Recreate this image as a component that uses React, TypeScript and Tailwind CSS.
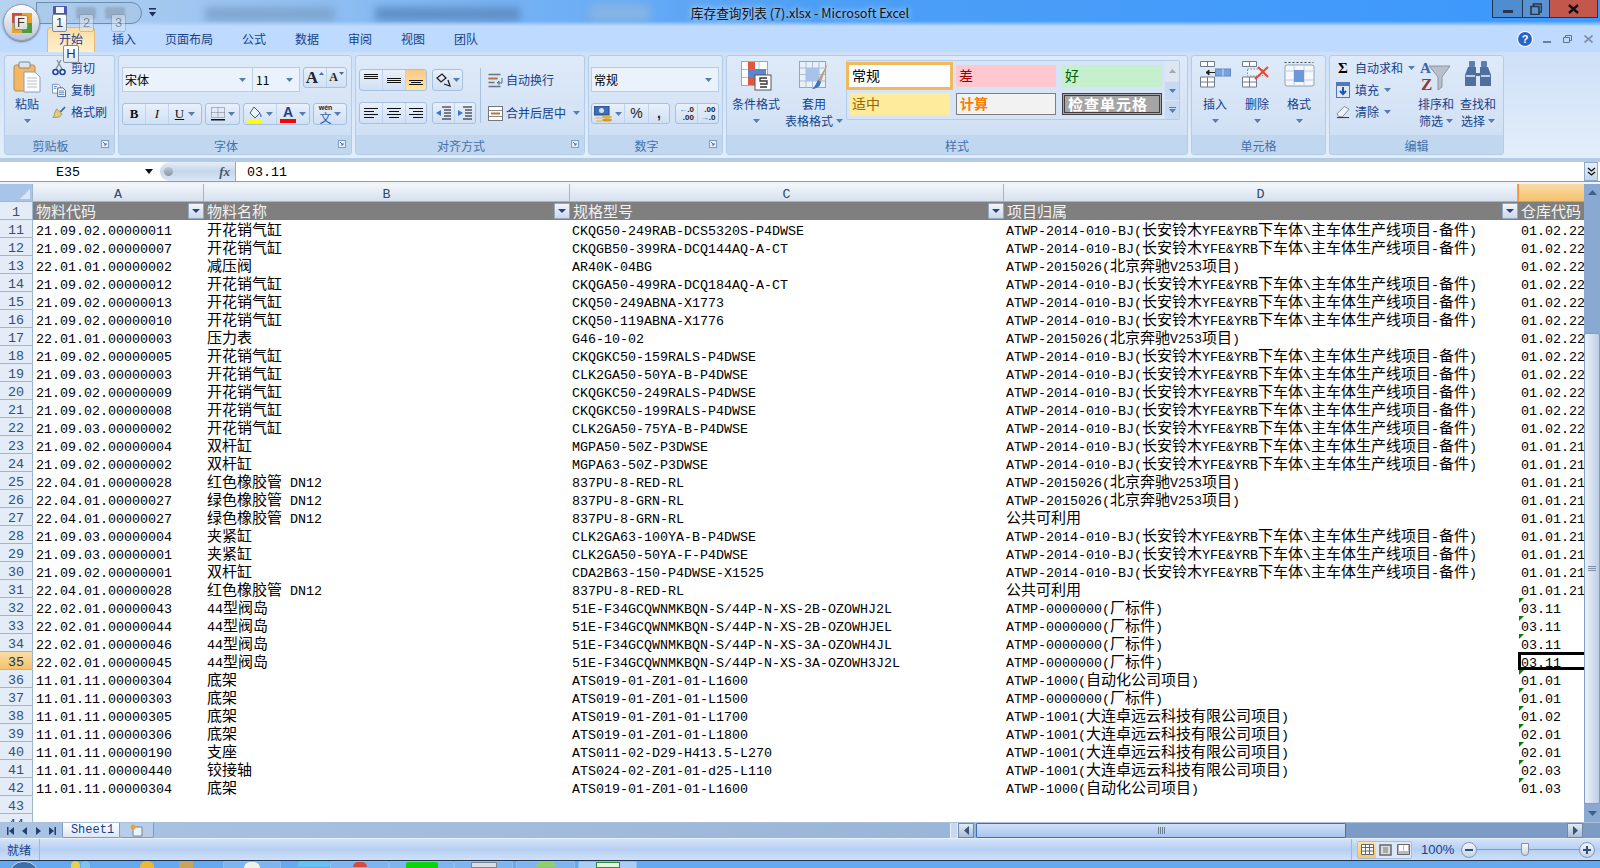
import { ReactNode } from "react"

const LING = "ATWP-2014-010-BJ(长安铃木YFE&YRB下车体\\主车体生产线项目-备件)"
const BENZ = "ATWP-2015026(北京奔驰V253项目)"
const PUB = "公共可利用"
const STD = "ATMP-0000000(厂标件)"
const AUTO = "ATWP-1000(自动化公司项目)"
const YUN = "ATWP-1001(大连卓远云科技有限公司项目)"
const VALVE = "开花销气缸"
const RED = "红色橡胶管 DN12"
const GRN = "绿色橡胶管 DN12"
const ISLAND = "44型阀岛"

const rows: [number, string, string, string, string, string][] = [
    [11, "21.09.02.00000011", VALVE, "CKQG50-249RAB-DCS5320S-P4DWSE", LING, "01.02.22"],
    [12, "21.09.02.00000007", VALVE, "CKQGB50-399RA-DCQ144AQ-A-CT", LING, "01.02.22"],
    [13, "22.01.01.00000002", "减压阀", "AR40K-04BG", BENZ, "01.02.22"],
    [14, "21.09.02.00000012", VALVE, "CKQGA50-499RA-DCQ184AQ-A-CT", LING, "01.02.22"],
    [15, "21.09.02.00000013", VALVE, "CKQ50-249ABNA-X1773", LING, "01.02.22"],
    [16, "21.09.02.00000010", VALVE, "CKQ50-119ABNA-X1776", LING, "01.02.22"],
    [17, "22.01.01.00000003", "压力表", "G46-10-02", BENZ, "01.02.22"],
    [18, "21.09.02.00000005", VALVE, "CKQGKC50-159RALS-P4DWSE", LING, "01.02.22"],
    [19, "21.09.03.00000003", VALVE, "CLK2GA50-50YA-B-P4DWSE", LING, "01.02.22"],
    [20, "21.09.02.00000009", VALVE, "CKQGKC50-249RALS-P4DWSE", LING, "01.02.22"],
    [21, "21.09.02.00000008", VALVE, "CKQGKC50-199RALS-P4DWSE", LING, "01.02.22"],
    [22, "21.09.03.00000002", VALVE, "CLK2GA50-75YA-B-P4DWSE", LING, "01.02.22"],
    [23, "21.09.02.00000004", "双杆缸", "MGPA50-50Z-P3DWSE", LING, "01.01.21"],
    [24, "21.09.02.00000002", "双杆缸", "MGPA63-50Z-P3DWSE", LING, "01.01.21"],
    [25, "22.04.01.00000028", RED, "837PU-8-RED-RL", BENZ, "01.01.21"],
    [26, "22.04.01.00000027", GRN, "837PU-8-GRN-RL", BENZ, "01.01.21"],
    [27, "22.04.01.00000027", GRN, "837PU-8-GRN-RL", PUB, "01.01.21"],
    [28, "21.09.03.00000004", "夹紧缸", "CLK2GA63-100YA-B-P4DWSE", LING, "01.01.21"],
    [29, "21.09.03.00000001", "夹紧缸", "CLK2GA50-50YA-F-P4DWSE", LING, "01.01.21"],
    [30, "21.09.02.00000001", "双杆缸", "CDA2B63-150-P4DWSE-X1525", LING, "01.01.21"],
    [31, "22.04.01.00000028", RED, "837PU-8-RED-RL", PUB, "01.01.21"],
    [32, "22.02.01.00000043", ISLAND, "51E-F34GCQWNMKBQN-S/44P-N-XS-2B-OZOWHJ2L", STD, "03.11"],
    [33, "22.02.01.00000044", ISLAND, "51E-F34GCQWNMKBQN-S/44P-N-XS-2B-OZOWHJEL", STD, "03.11"],
    [34, "22.02.01.00000046", ISLAND, "51E-F34GCQWNMKBQN-S/44P-N-XS-3A-OZOWH4JL", STD, "03.11"],
    [35, "22.02.01.00000045", ISLAND, "51E-F34GCQWNMKBQN-S/44P-N-XS-3A-OZOWH3J2L", STD, "03.11"],
    [36, "11.01.11.00000304", "底架", "ATS019-01-Z01-01-L1600", AUTO, "01.01"],
    [37, "11.01.11.00000303", "底架", "ATS019-01-Z01-01-L1500", STD, "01.01"],
    [38, "11.01.11.00000305", "底架", "ATS019-01-Z01-01-L1700", YUN, "01.02"],
    [39, "11.01.11.00000306", "底架", "ATS019-01-Z01-01-L1800", YUN, "02.01"],
    [40, "11.01.11.00000190", "支座", "ATS011-02-D29-H413.5-L270", YUN, "02.01"],
    [41, "11.01.11.00000440", "铰接轴", "ATS024-02-Z01-01-d25-L110", YUN, "02.03"],
    [42, "11.01.11.00000304", "底架", "ATS019-01-Z01-01-L1600", AUTO, "01.03"],
    [43, "", "", "", "", ""],
    [44, "", "", "", "", ""],
]

// latin glyphs are half the width of the chinese ones, as in SimSun
function Mixed({ text }: { text: string }) {
    const parts = text.split(/([\u2e80-\u9fff\uff00-\uffef]+)/)
    return (
        <>
            {parts.map((p, i) =>
                i % 2 ? (
                    <span key={i} className="font-['Noto_Sans_CJK_SC',sans-serif] text-[15px] leading-[0]">
                        {p}
                    </span>
                ) : (
                    <span key={i}>{p}</span>
                )
            )}
        </>
    )
}

function Caret({ className = "" }: { className?: string }) {
    return (
        <svg width="7" height="4" viewBox="0 0 7 4" className={`shrink-0 ${className}`}>
            <path d="M0 0h7L3.5 4z" fill="#567db1" />
        </svg>
    )
}

function KeyTip({ label, className }: { label: string; className: string }) {
    return (
        <div className={`absolute z-20 flex items-center justify-center rounded-[2px] border border-[#7f8c9c] bg-gradient-to-b from-white to-[#dfe6ef] font-['Liberation_Sans',sans-serif] text-[13px] text-[#333] ${className}`}>
            {label}
        </div>
    )
}

function TitleBar() {
    return (
        <div className="relative flex h-[26px] shrink-0 items-center justify-center overflow-hidden bg-gradient-to-r from-[#b7d2ee] via-[#4d9ff6] to-[#3b98fd]">
            <div className="absolute left-[205px] top-[7px] h-[14px] w-[130px] bg-[#7fa6d0] blur-[4px]" />
            <div className="absolute left-[375px] top-[7px] h-[14px] w-[145px] bg-[#5f8fc6] blur-[4px]" />
            <div className="absolute left-[590px] top-[4px] h-[18px] w-[60px] bg-[#86b5e4] blur-[5px]" />
            <div className="absolute bottom-0 left-0 h-[5px] w-full bg-gradient-to-b from-transparent to-[#bcd8fb]" />
            <span className="relative font-['Noto_Sans_CJK_SC',sans-serif] text-[12.7px] text-[#111] [text-shadow:0_0_6px_#ffffff]">
                库存查询列表 (7).xlsx - Microsoft Excel
            </span>
            <div className="absolute right-[2px] top-0 flex h-[18px] border-x border-b border-[#23344d]">
                <div className="flex w-[29px] items-end justify-center bg-[#4f8cd0] pb-[4px]">
                    <div className="h-[3px] w-[10px] bg-[#26364d]" />
                </div>
                <div className="flex w-[27px] items-center justify-center border-l border-[#23344d] bg-[#5a92d2]">
                    <svg width="12" height="12" viewBox="0 0 12 12">
                        <path d="M3.5 3V1h8v8H9M1 3.5h8v8H1z" fill="none" stroke="#26364d" strokeWidth="1.6" />
                    </svg>
                </div>
                <div className="flex w-[48px] items-center justify-center border-l border-[#23344d] bg-[#c4574b]">
                    <svg width="11" height="10" viewBox="0 0 11 10">
                        <path d="M1 1l9 8M10 1L1 9" stroke="#111" strokeWidth="2.4" />
                    </svg>
                </div>
            </div>
        </div>
    )
}

function Chrome() {
    return (
        <>
            <div className="absolute left-[36px] top-[2px] z-10 flex h-[22px] w-[106px] items-center gap-[9px] rounded-r-full border border-[#6c8db0] bg-[#a9c7e6]/60 pl-[16px]">
                <svg width="14" height="14" viewBox="0 0 14 14">
                    <rect width="14" height="14" rx="1" fill="#4b57a8" />
                    <rect x="3" y="1" width="8" height="6" fill="#f2f5fb" />
                    <rect x="4" y="9" width="6" height="5" fill="#b9c2d8" />
                </svg>
                <div className="h-[12px] w-[20px] rounded-[2px] bg-[#93adc9] blur-[1px]" />
                <div className="h-[12px] w-[20px] rounded-[2px] bg-[#93adc9] blur-[1px]" />
            </div>
            <svg width="7" height="9" viewBox="0 0 7 9" className="absolute left-[149px] top-[8px] z-10">
                <path d="M0 0h7v1.5H0zM0 4h7L3.5 8.5z" fill="#1c2f55" />
            </svg>
            <div className="absolute left-[3px] top-[4px] z-10 flex h-[37px] w-[37px] items-center justify-center rounded-full border border-[#8f9aa6] bg-gradient-to-b from-white to-[#b9c6d6] shadow-[0_1px_2px_#5d7089]">
                <svg width="24" height="24" viewBox="0 0 24 24">
                    <path d="M2 2h10v10H2z" fill="#d9492f" />
                    <path d="M12 2h10v10H12z" fill="#e8a32c" />
                    <path d="M2 12h10v10H2z" fill="#e8a32c" />
                    <path d="M12 12h10v10H12z" fill="#4f9a3a" />
                </svg>
            </div>
            <KeyTip label="F" className="left-[14px] top-[15px] h-[15px] w-[14px] opacity-90" />
            <KeyTip label="1" className="left-[52px] top-[14px] h-[18px] w-[15px]" />
            <KeyTip label="2" className="left-[79px] top-[14px] h-[18px] w-[15px] opacity-40" />
            <KeyTip label="3" className="left-[111px] top-[14px] h-[18px] w-[15px] opacity-40" />
            <KeyTip label="H" className="left-[63px] top-[45px] h-[18px] w-[16px]" />
        </>
    )
}

function TabStrip() {
    const tabs = ["插入", "页面布局", "公式", "数据", "审阅", "视图", "团队"]
    return (
        <div className="relative flex h-[26px] shrink-0 items-end bg-[#bedafe] pl-[47px] font-['Noto_Sans_CJK_SC',sans-serif] text-[12px] text-[#15428b]">
            <div className="flex h-[25px] w-[48px] items-center justify-center rounded-t-[4px] border-x border-t border-[#e8b768] bg-gradient-to-b from-[#fcdda2] to-[#fff0cd] pb-[2px]">
                开始
            </div>
            <div className="ml-[17px] flex h-[25px] items-center gap-[29px] pb-[2px]">
                {tabs.map((t) => (
                    <span key={t}>{t}</span>
                ))}
            </div>
            <div className="absolute right-0 top-[6px] flex h-[14px] items-center">
                <div className="mr-[11px] flex h-[14px] w-[14px] items-center justify-center rounded-full bg-[#2a62c8] font-['Liberation_Sans',sans-serif] text-[11px] font-bold text-white ring-1 ring-white">
                    ?
                </div>
                <div className="mr-[12px] mt-[6px] h-[2px] w-[8px] bg-[#6c7f96]" />
                <svg width="9" height="8" viewBox="0 0 9 8" className="mr-[12px]">
                    <path d="M2.5 2V.5h6v5H7M.5 2.5h6v5h-6z" fill="none" stroke="#5f738c" />
                </svg>
                <svg width="9" height="8" viewBox="0 0 9 8" className="mr-[7px]">
                    <path d="M.5.5l8 7M8.5.5l-8 7" stroke="#7e8ea2" strokeWidth="1.6" />
                </svg>
            </div>
        </div>
    )
}

function Launcher() {
    return (
        <svg width="8" height="8" viewBox="0 0 8 8" className="absolute right-[5px] top-[5px]">
            <rect x=".5" y=".5" width="7" height="7" fill="#e6eefa" stroke="#7f9cc4" />
            <path d="M2 2l3 3M5 3v2H3" fill="none" stroke="#4f709f" />
        </svg>
    )
}

function Group({ label, className, launcher, children }: { label: string; className: string; launcher?: boolean; children: ReactNode }) {
    return (
        <div className={`flex shrink-0 flex-col overflow-hidden rounded-[3px] border border-[#b4cce8] bg-gradient-to-b from-[#deeaf9] to-[#cddef3] ${className}`}>
            <div className="flex min-h-0 flex-1">{children}</div>
            <div className={`relative flex h-[19px] shrink-0 items-center justify-center bg-[#c1d7ef] pt-[1px] text-[12px] leading-[17px] text-[#4670aa] ${launcher ? "pr-[18px]" : ""}`}>
                {label}
                {launcher && <Launcher />}
            </div>
        </div>
    )
}

function LargeBtn({ icon, label, label2, className }: { icon: ReactNode; label: string; label2?: string; className: string }) {
    return (
        <div className={`flex shrink-0 flex-col items-center pt-[5px] ${className}`}>
            <div className="flex h-[34px] items-start justify-center">{icon}</div>
            <div className="h-[17px] whitespace-nowrap leading-[17px]">{label}</div>
            <div className="flex h-[17px] items-center gap-[3px] whitespace-nowrap leading-[17px]">
                {label2}
                <Caret />
            </div>
        </div>
    )
}

function SmallRow({ icon, label, caret }: { icon: ReactNode; label: string; caret?: boolean }) {
    return (
        <div className="flex h-[22px] items-center whitespace-nowrap leading-[18px]">
            <div className="flex w-[14px] shrink-0 items-center justify-center">{icon}</div>
            <span className="ml-[5px]">{label}</span>
            {caret && <Caret className="ml-[5px]" />}
        </div>
    )
}

function Segs({ className, children }: { className: string; children: ReactNode }) {
    return (
        <div className={`flex shrink-0 divide-x divide-[#c0d3ea] overflow-hidden rounded-[3px] border border-[#a7c0de] bg-gradient-to-b from-[#e8f0fb] to-[#d0e0f4] ${className}`}>
            {children}
        </div>
    )
}

function Seg({ className = "", children }: { className?: string; children: ReactNode }) {
    return <div className={`flex h-full shrink-0 items-center justify-center ${className}`}>{children}</div>
}

function Lines({ ys, xs }: { ys: number[]; xs: [number, number][] }) {
    return (
        <svg width="16" height="16" viewBox="0 0 16 16">
            {ys.map((y, i) => (
                <rect key={y} x={xs[i % xs.length][0]} y={y} width={xs[i % xs.length][1]} height="1" fill="#111" />
            ))}
        </svg>
    )
}

const fullW: [number, number][] = [[1, 14]]

function PasteIcon() {
    return (
        <svg width="28" height="32" viewBox="0 0 28 32">
            <rect x="1" y="4" width="21" height="26" rx="2" fill="#f2b866" stroke="#b98d4f" />
            <rect x="6" y="1" width="11" height="6" rx="1" fill="#dfe4ea" stroke="#7b8794" />
            <path d="M11 11h11l5 5v15H11z" fill="#fdfeff" stroke="#8fa0b3" />
            <path d="M14 17h10M14 20h10M14 23h10M14 26h10" stroke="#b4bfcc" />
        </svg>
    )
}

function CutIcon() {
    return (
        <svg width="14" height="16" viewBox="0 0 14 16">
            <path d="M4 9L9 0M10 9L5 0" stroke="#7c8794" strokeWidth="1.2" />
            <circle cx="3.5" cy="12" r="2.5" fill="none" stroke="#26478f" strokeWidth="1.6" />
            <circle cx="10.5" cy="12" r="2.5" fill="none" stroke="#26478f" strokeWidth="1.6" />
        </svg>
    )
}

function CopyIcon() {
    return (
        <svg width="16" height="15" viewBox="0 0 16 15">
            <path d="M.5.5h7l2 2v8h-9z" fill="#fff" stroke="#6f88ad" />
            <path d="M6.5 4.5h6l3 3v7h-9z" fill="#fff" stroke="#35578f" />
            <path d="M2 3h4M2 5h3M8 8h6M8 10h6M8 12h6" stroke="#4f76ad" />
        </svg>
    )
}

function BrushIcon() {
    return (
        <svg width="18" height="16" viewBox="0 0 18 16">
            <path d="M10 7l6-6 1.5 1.5-6 6z" fill="#43649b" />
            <path d="M6 4l7 7-3 3c-3 1-6 1-9 1 2-1 2-3 2-5z" fill="#e3cb7a" stroke="#9c8548" />
        </svg>
    )
}

function CondIcon() {
    return (
        <svg width="31" height="30" viewBox="0 0 31 30">
            <rect x=".5" y=".5" width="26" height="24" fill="#fff" stroke="#9aa6b5" />
            <path d="M9 1v24M18 1v24M1 8.5h25M1 16.5h25" stroke="#b5c0cd" />
            <rect x="7" y="1" width="7" height="7" fill="#e0563f" />
            <rect x="7" y="8" width="18" height="8" fill="#5b86c9" />
            <rect x="7" y="16" width="7" height="8" fill="#e0563f" />
            <rect x="14" y="14" width="16" height="15" fill="#fff" stroke="#555" />
            <path d="M26 17h-7v3h7v3h-7M19 26h7" fill="none" stroke="#333" strokeWidth="1.3" />
        </svg>
    )
}

function TableIcon() {
    return (
        <svg width="31" height="30" viewBox="0 0 31 30">
            <rect x=".5" y=".5" width="26" height="26" fill="#e8f0fa" stroke="#9aa6b5" />
            <path d="M7 1v26M13.500 1v26M20 1v26M1 7h25M1 13.500h25M1 20h25" stroke="#aebccd" />
            <rect x="7" y="7" width="13" height="13" fill="#a9c2ea" />
            <path d="M29 2l-10 17 3 2z" fill="#b8a37a" />
            <path d="M19 19l3 2c-1 5-5 7-9 7 3-2 4-6 6-9z" fill="#3f72b8" />
        </svg>
    )
}

function InsertIcon() {
    return (
        <svg width="31" height="28" viewBox="0 0 31 28">
            <path d="M.5.5h14v5H.5zM7.500.5v5M.5 16h14v10H.5zM.5 21h14M7.500 16v10" fill="#fff" stroke="#6b7a8c" />
            <rect x="15.500" y="8" width="15" height="7" fill="#7aa2dc" stroke="#5f87c2" />
            <path d="M23 8v7" stroke="#cfe0f7" />
            <path d="M6 11.500h9M6 11.500l3-2.500v5z" stroke="#222" fill="#222" />
        </svg>
    )
}

function DeleteIcon() {
    return (
        <svg width="31" height="28" viewBox="0 0 31 28">
            <path d="M.5.5h14v5H.5zM7.500.5v5M.5 16h14v10H.5zM.5 21h14M7.500 16v10" fill="#fff" stroke="#6b7a8c" />
            <rect x="5.500" y="8" width="15" height="7" fill="#eaf1fb" stroke="#7a8ea8" strokeDasharray="1.500 1.500" />
            <path d="M16 6l10 10M26 6L13 18" stroke="#e04a36" strokeWidth="2" />
        </svg>
    )
}

function FormatIcon() {
    return (
        <svg width="31" height="28" viewBox="0 0 31 28">
            <path d="M.5 1.500h29" stroke="#444" strokeDasharray="2 2" />
            <rect x="1" y="4" width="29" height="21" rx="2" fill="#f5f8fc" stroke="#93a2b4" />
            <path d="M1 10h29M1 19h29M10 4v21M20 4v21" stroke="#c1ccd9" />
            <rect x="10" y="9" width="10" height="12" fill="#6d97dc" />
        </svg>
    )
}

function SortIcon() {
    return (
        <svg width="32" height="30" viewBox="0 0 32 30">
            <text x="0" y="12" fontFamily="Liberation Serif, serif" fontWeight="700" fontSize="15" fill="#3566ad">A</text>
            <text x="1" y="29" fontFamily="Liberation Serif, serif" fontWeight="700" fontSize="17" fill="#8f3b34">Z</text>
            <path d="M9 5h21l-8 11v10l-4 3V16z" fill="#b9c0c9" stroke="#8b95a2" />
        </svg>
    )
}

function FindIcon() {
    return (
        <svg width="28" height="26" viewBox="0 0 28 26">
            <rect x="5" y="0" width="6" height="6" rx="1" fill="#5d7fae" />
            <rect x="17" y="0" width="6" height="6" rx="1" fill="#5d7fae" />
            <path d="M4 6h8v6H16V6h8l3 8v11H16V15h-4v10H1V14z" fill="#4f6f9f" />
            <path d="M2 15h9M17 15h9" stroke="#bcd0ea" strokeWidth="2" />
        </svg>
    )
}

function MiniCell({ className, children }: { className: string; children: ReactNode }) {
    return <div className={`flex h-[22px] items-center pb-[3px] pl-[3px] text-[14px] leading-[18px] ${className}`}>{children}</div>
}

function Ribbon() {
    return (
        <div className="relative flex h-[106px] shrink-0 gap-[3px] bg-gradient-to-b from-[#cee0f7] to-[#e3eefb] pb-[3px] pl-[4px] pt-[3px] font-['Noto_Sans_CJK_SC',sans-serif] text-[12px] text-[#15428b]">
            <Group label="剪贴板" launcher className="w-[111px]">
                <LargeBtn icon={<PasteIcon />} label="粘贴" className="w-[44px]" />
                <div className="ml-[3px] pt-[1px]">
                    <SmallRow icon={<CutIcon />} label="剪切" />
                    <SmallRow icon={<CopyIcon />} label="复制" />
                    <SmallRow icon={<BrushIcon />} label="格式刷" />
                </div>
            </Group>

            <Group label="字体" launcher className="w-[234px]">
                <div className="flex flex-col gap-[11px] pl-[3px] pt-[11px]">
                    <div className="flex items-start">
                        <div className="flex h-[25px] w-[131px] items-center justify-between border border-[#b9cde6] bg-[#eaf2fc] pl-[2px] pr-[6px] text-black">
                            宋体
                            <Caret />
                        </div>
                        <div className="flex h-[25px] w-[47px] items-center justify-between border border-l-0 border-[#b9cde6] bg-[#eaf2fc] pl-[3px] pr-[6px] text-black">
                            11
                            <Caret />
                        </div>
                        <Segs className="ml-[3px] h-[21px] w-[44px]">
                            <Seg className="w-[23px] gap-px font-['Liberation_Serif',serif] text-[17px] font-bold leading-[19px] text-[#222]">
                                A
                                <svg width="5" height="3" viewBox="0 0 5 3" className="mb-[8px]"><path d="M0 3h5L2.500 0z" fill="#3f6fb0" /></svg>
                            </Seg>
                            <Seg className="flex-1 gap-px font-['Liberation_Serif',serif] text-[12px] font-bold leading-[19px] text-[#222]">
                                A
                                <svg width="5" height="3" viewBox="0 0 5 3" className="mb-[8px]"><path d="M0 0h5L2.500 3z" fill="#3f6fb0" /></svg>
                            </Seg>
                        </Segs>
                    </div>
                    <div className="flex gap-[3px]">
                        <Segs className="h-[22px] w-[80px] font-['Liberation_Serif',serif] text-[13px] text-[#111]">
                            <Seg className="w-[23px] font-bold">B</Seg>
                            <Seg className="w-[23px] italic">I</Seg>
                            <Seg className="flex-1 gap-[4px] underline">U<Caret /></Seg>
                        </Segs>
                        <Segs className="h-[22px] w-[35px]">
                            <Seg className="flex-1 gap-[3px]">
                                <svg width="14" height="14" viewBox="0 0 14 14">
                                    <path d="M.5.500h13v10H.5zM7 .5v10M.5 5.500h13" fill="none" stroke="#777" strokeDasharray="1 1" />
                                    <rect y="12" width="14" height="1.500" fill="#111" />
                                </svg>
                                <Caret />
                            </Seg>
                        </Segs>
                        <Segs className="h-[22px] w-[67px]">
                            <Seg className="w-[33px] gap-[3px]">
                                <svg width="16" height="17" viewBox="0 0 16 17">
                                    <path d="M7 1l6 6-5 5-5-5z" fill="#eef3fa" stroke="#3c5b8c" />
                                    <path d="M13 7c2 2 2 4 1 4s-1-2-1-4z" fill="#3c6fc0" />
                                    <rect y="13" width="15" height="4" fill="#ffff00" />
                                </svg>
                                <Caret />
                            </Seg>
                            <Seg className="flex-1 gap-[3px]">
                                <div className="flex flex-col items-center font-['Liberation_Sans',sans-serif] text-[14px] font-bold leading-[13px] text-[#1d3f84]">
                                    A
                                    <div className="h-[4px] w-[16px] bg-[#ff0000]" />
                                </div>
                                <Caret />
                            </Seg>
                        </Segs>
                        <Segs className="h-[22px] w-[34px]">
                            <Seg className="flex-1 gap-[2px]">
                                <div className="flex flex-col items-center">
                                    <span className="font-['Liberation_Sans',sans-serif] text-[7px] font-bold leading-[8px] text-[#222]">wén</span>
                                    <span className="text-[12px] leading-[12px] text-[#2d5fb0]">文</span>
                                </div>
                                <Caret />
                            </Seg>
                        </Segs>
                    </div>
                </div>
            </Group>

            <Group label="对齐方式" launcher className="w-[230px]">
                <div className="flex flex-col gap-[11px] pl-[3px] pt-[13px]">
                    <div className="flex gap-[5px]">
                        <Segs className="h-[22px] w-[68px]">
                            <Seg className="w-[23px]"><Lines ys={[2, 4, 6]} xs={fullW} /></Seg>
                            <Seg className="w-[23px]"><Lines ys={[6, 8, 10]} xs={fullW} /></Seg>
                            <Seg className="flex-1 bg-gradient-to-b from-[#f9c888] to-[#fde79e]"><Lines ys={[8, 10, 12]} xs={[[1, 14], [3, 10]]} /></Seg>
                        </Segs>
                        <Segs className="h-[22px] w-[31px]">
                            <Seg className="flex-1 gap-[2px]">
                                <svg width="15" height="14" viewBox="0 0 15 14">
                                    <path d="M1 5l5-4 4 4-5 4zM8 11l6 2-2-6" fill="none" stroke="#222" strokeWidth="1.300" />
                                </svg>
                                <Caret />
                            </Seg>
                        </Segs>
                    </div>
                    <div className="flex gap-[5px]">
                        <Segs className="h-[22px] w-[68px]">
                            <Seg className="w-[23px]"><Lines ys={[3, 6, 9, 12]} xs={[[1, 14], [1, 10]]} /></Seg>
                            <Seg className="w-[23px]"><Lines ys={[3, 6, 9, 12]} xs={[[1, 14], [3, 10]]} /></Seg>
                            <Seg className="flex-1"><Lines ys={[3, 6, 9, 12]} xs={[[1, 14], [5, 10]]} /></Seg>
                        </Segs>
                        <Segs className="h-[22px] w-[44px]">
                            <Seg className="w-[22px]">
                                <svg width="16" height="14" viewBox="0 0 16 14">
                                    <path d="M6 1h9M8 4h7M8 7h7M8 10h7M6 13h9" stroke="#111" />
                                    <path d="M0 7l5-3v6z" fill="#3c78c8" />
                                </svg>
                            </Seg>
                            <Seg className="flex-1">
                                <svg width="16" height="14" viewBox="0 0 16 14">
                                    <path d="M6 1h9M8 4h7M8 7h7M8 10h7M6 13h9" stroke="#111" />
                                    <path d="M6 7L1 4v6z" fill="#3c78c8" />
                                </svg>
                            </Seg>
                        </Segs>
                    </div>
                </div>
                <div className="ml-[4px] mt-[12px] h-[55px] w-px bg-[#a9c1de]" />
                <div className="ml-[7px] flex flex-col gap-[11px] whitespace-nowrap pt-[13px] leading-[18px]">
                    <div className="flex h-[22px] items-center gap-[3px]">
                        <svg width="15" height="15" viewBox="0 0 15 15" className="shrink-0">
                            <path d="M.5 1.500h12M.5 5.500h9M.5 9.500h6M.5 13.500h12" stroke="#6b7280" strokeWidth="1.500" />
                            <path d="M.5 5.500h9" stroke="#b5763a" strokeWidth="1.500" />
                            <path d="M14 5v5H9l2-2v4" fill="none" stroke="#4f6f9f" />
                        </svg>
                        自动换行
                    </div>
                    <div className="flex h-[22px] items-center gap-[3px]">
                        <svg width="15" height="15" viewBox="0 0 15 15" className="shrink-0">
                            <rect x=".5" y=".5" width="14" height="14" fill="#fff" stroke="#777" />
                            <path d="M1 4.500h13M1 10.500h13" stroke="#888" />
                            <path d="M3 7.500h9" stroke="#b5763a" strokeWidth="2" />
                        </svg>
                        合并后居中
                        <Caret className="ml-[4px]" />
                    </div>
                </div>
            </Group>

            <Group label="数字" launcher className="w-[135px]">
                <div className="flex flex-col gap-[11px] pl-[2px] pt-[11px]">
                    <div className="flex h-[25px] w-[128px] items-center justify-between border border-[#b9cde6] bg-[#eaf2fc] pl-[2px] pr-[6px] text-black">
                        常规
                        <Caret />
                    </div>
                    <div className="flex gap-[5px]">
                        <Segs className="h-[21px] w-[79px]">
                            <Seg className="w-[33px] gap-[2px]">
                                <svg width="19" height="16" viewBox="0 0 19 16">
                                    <rect width="15" height="9" fill="#3f6db5" stroke="#28497f" />
                                    <circle cx="7.500" cy="4.500" r="2.500" fill="#cfe0f7" />
                                    <ellipse cx="13" cy="11" rx="5" ry="1.500" fill="#e7b02f" />
                                    <ellipse cx="13" cy="14" rx="5" ry="1.500" fill="#d59a20" />
                                    <path d="M2 12h6M2 15h6" stroke="#e7b02f" />
                                </svg>
                                <Caret />
                            </Seg>
                            <Seg className="w-[24px] font-['Liberation_Sans',sans-serif] text-[14px] text-[#222]">%</Seg>
                            <Seg className="flex-1 font-['Liberation_Sans',sans-serif] text-[14px] font-bold text-[#222]">,</Seg>
                        </Segs>
                        <Segs className="h-[21px] w-[44px] font-['Liberation_Sans',sans-serif] text-[8px] font-bold leading-[8px] text-[#222]">
                            <Seg className="w-[22px]">
                                <div className="flex flex-col items-end">
                                    <span><span className="text-[#2f69b8]">←</span>.0</span>
                                    <span>.00</span>
                                </div>
                            </Seg>
                            <Seg className="flex-1">
                                <div className="flex flex-col items-end">
                                    <span>.00</span>
                                    <span><span className="text-[#2f69b8]">→</span>.0</span>
                                </div>
                            </Seg>
                        </Segs>
                    </div>
                </div>
            </Group>

            <Group label="样式" className="w-[462px]">
                <LargeBtn icon={<CondIcon />} label="条件格式" className="w-[58px]" />
                <LargeBtn icon={<TableIcon />} label="套用" label2="表格格式" className="w-[58px]" />
                <div className="ml-[3px] mt-[4px] flex h-[60px] w-[334px] rounded-[2px] border border-[#b4cce8] bg-[#d5e4f6]">
                    <div className="grid flex-1 grid-cols-[101px_100px_100px] content-start gap-x-[6px] gap-y-[6px] pl-[2px] pt-[4px]">
                        <MiniCell className="bg-white text-black outline-[3px] outline-[#f0b95c]">常规</MiniCell>
                        <MiniCell className="bg-[#ffc7ce] text-[#9c0006]">差</MiniCell>
                        <MiniCell className="bg-[#c6efce] text-[#006100]">好</MiniCell>
                        <MiniCell className="bg-[#ffeb9c] text-[#9c6500]">适中</MiniCell>
                        <MiniCell className="border border-[#7f7f7f] bg-[#f2f2f2] font-bold text-[#fa7d00]">计算</MiniCell>
                        <MiniCell className="border-[3px] border-double border-[#3f3f3f] bg-[#a5a5a5] !pb-0 !text-[15px] font-bold tracking-[1px] text-white">检查单元格</MiniCell>
                    </div>
                    <div className="flex w-[14px] flex-col gap-px">
                        <div className="flex h-[20px] items-center justify-center rounded-t-[2px] bg-[#dde6f1]">
                            <svg width="7" height="4" viewBox="0 0 7 4"><path d="M0 4h7L3.500 0z" fill="#9aa9bb" /></svg>
                        </div>
                        <div className="flex h-[18px] items-center justify-center bg-[#c7daf2]"><Caret /></div>
                        <div className="flex flex-1 flex-col items-center justify-center gap-px rounded-b-[2px] bg-[#c7daf2]">
                            <div className="h-px w-[7px] bg-[#567db1]" />
                            <Caret />
                        </div>
                    </div>
                </div>
            </Group>

            <Group label="单元格" className="w-[135px]">
                <div className="flex pl-[2px]">
                    <LargeBtn icon={<InsertIcon />} label="插入" className="w-[42px]" />
                    <LargeBtn icon={<DeleteIcon />} label="删除" className="w-[42px]" />
                    <LargeBtn icon={<FormatIcon />} label="格式" className="w-[42px]" />
                </div>
            </Group>

            <Group label="编辑" className="w-[175px]">
                <div className="w-[85px] shrink-0 pl-[6px] pt-[1px]">
                    <SmallRow caret icon={<span className="font-['Liberation_Serif',serif] text-[15px] font-bold text-black">Σ</span>} label="自动求和" />
                    <SmallRow caret icon={
                        <svg width="14" height="16" viewBox="0 0 14 16">
                            <rect x=".5" y=".5" width="13" height="15" fill="#dce8f8" stroke="#4f78b5" />
                            <rect x="1" y="1" width="12" height="3" fill="#4f78b5" />
                            <path d="M7 5v7M4 9l3 3 3-3" fill="none" stroke="#1f55b0" strokeWidth="2" />
                        </svg>
                    } label="填充" />
                    <SmallRow caret icon={
                        <svg width="15" height="14" viewBox="0 0 15 14">
                            <path d="M1 9l8-8 5 3-7 8H3z" fill="#eef1f5" stroke="#7c8794" />
                            <path d="M1 13h13" stroke="#222" />
                        </svg>
                    } label="清除" />
                </div>
                <LargeBtn icon={<SortIcon />} label="排序和" label2="筛选" className="w-[42px]" />
                <LargeBtn icon={<FindIcon />} label="查找和" label2="选择" className="w-[42px]" />
            </Group>
        </div>
    )
}

function FormulaBar() {
    return (
        <div className="flex h-[26px] shrink-0 flex-col bg-[#b4cbe6] pt-[4px] font-['Liberation_Mono',monospace] text-[13.33px] text-black">
            <div className="flex h-[19px] shrink-0 items-stretch bg-white">
                <div className="flex w-[160px] shrink-0 items-center">
                    <span className="ml-[56px] w-[89px] pt-[2px] leading-[17px]">E35</span>
                    <svg width="8" height="5" viewBox="0 0 8 5"><path d="M0 0h8L4 5z" fill="#111" /></svg>
                </div>
                <div className="flex w-[76px] shrink-0 items-center justify-between rounded-l-full border-r border-[#8fa9c8] bg-gradient-to-b from-[#e4edf8] via-[#c6d7ec] to-[#dae6f4] pl-[4px] pr-[5px]">
                    <div className="h-[9px] w-[9px] rounded-full bg-gradient-to-b from-[#c0c8d2] to-[#8996a6]" />
                    <span className="font-['Liberation_Serif',serif] text-[13px] font-bold italic text-[#44566c]">fx</span>
                </div>
                <span className="ml-[11px] flex-1 pt-[2px] leading-[17px]">03.11</span>
                <div className="mr-[2px] flex w-[14px] items-center justify-center border border-[#8fa9c8] bg-gradient-to-b from-[#e7eff9] to-[#c4d6ec]">
                    <svg width="9" height="9" viewBox="0 0 9 9"><path d="M1 1l3.500 3L8 1M1 5l3.500 3L8 5" fill="none" stroke="#111" strokeWidth="1.300" /></svg>
                </div>
            </div>
            <div className="h-px bg-[#7f9dc0]" />
            <div className="flex-1 bg-[#eef3fa]" />
        </div>
    )
}

function Filter() {
    return (
        <div className="absolute right-0 top-[1px] flex h-[16px] w-[16px] items-center justify-center rounded-[1px] border border-[#93a9c6] bg-gradient-to-b from-[#f3f6fb] to-[#cbd7e8]">
            <svg width="8" height="4" viewBox="0 0 8 4"><path d="M0 0h8L4 4z" fill="#23408c" /></svg>
        </div>
    )
}

function HeadCell({ className, label, filter }: { className: string; label: string; filter?: boolean }) {
    return (
        <div className={`relative shrink-0 whitespace-nowrap pl-[3px] pt-[1px] font-['Noto_Sans_CJK_SC',sans-serif] text-[15px] leading-[16px] text-[#f2f2f2] ${className}`}>
            {label}
            {filter && <Filter />}
        </div>
    )
}

function Cell({ className, text }: { className: string; text: string }) {
    return (
        <div className={`h-[18px] shrink-0 whitespace-nowrap pt-[5px] leading-[14px] ${className}`}>
            <Mixed text={text} />
        </div>
    )
}

function RowHead({ n, active }: { n: number; active?: boolean }) {
    return (
        <div className={`h-[18px] w-[33px] shrink-0 border-b border-r border-[#9eb6ce] pt-[4px] text-center leading-[13px] ${active ? "bg-gradient-to-b from-[#f9dda6] to-[#f3c26a] text-[#15325a]" : "bg-[#e4ecf7] text-[#35506e]"}`}>
            {n}
        </div>
    )
}

function Sheet() {
    return (
        <div className="flex min-h-0 flex-1 bg-white font-['Liberation_Mono','Noto_Sans_CJK_SC',monospace] text-[13.33px] text-black">
            <div className="min-w-0 flex-1 overflow-hidden">
                <div className="flex h-[18px] text-[#2d4a66]">
                    <div className="flex w-[33px] shrink-0 items-end justify-end border-b border-r border-[#9eb6ce] bg-[#a9c4e9] p-[2px]">
                        <svg width="10" height="10" viewBox="0 0 10 10"><path d="M10 0v10H0z" fill="#dbe7f6" /></svg>
                    </div>
                    {[["A", "w-[171px]"], ["B", "w-[366px]"], ["C", "w-[434px]"], ["D", "w-[514px]"]].map(([c, w]) => (
                        <div key={c} className={`${w} shrink-0 border-b border-r border-[#9eb6ce] bg-gradient-to-b from-[#f3f6fb] to-[#d6e1ef] pt-[4px] text-center leading-[13px]`}>
                            {c}
                        </div>
                    ))}
                    <div className="w-[66px] shrink-0 border-b border-l border-[#f29536] bg-gradient-to-b from-[#f9dba8] to-[#f4c26b]" />
                </div>
                <div className="flex h-[18px]">
                    <RowHead n={1} />
                    <HeadCell className="w-[171px] bg-[#7f7f7f]" label="物料代码" filter />
                    <HeadCell className="w-[366px] bg-[#7f7f7f]" label="物料名称" filter />
                    <HeadCell className="w-[434px] bg-[#7f7f7f]" label="规格型号" filter />
                    <HeadCell className="w-[514px] bg-[#7f7f7f]" label="项目归属" filter />
                    <HeadCell className="w-[66px] bg-[#7f7f7f]" label="仓库代码" />
                </div>
                {rows.map(([n, a, b, c, d, e]) => (
                    <div key={n} className="flex h-[18px]">
                        <RowHead n={n} active={n === 35} />
                        <Cell className="w-[171px] pl-[3px]" text={a} />
                        <Cell className="w-[366px] pl-[3px]" text={b} />
                        <Cell className="w-[434px] pl-[2px]" text={c} />
                        <Cell className="w-[514px] pl-[2px]" text={d} />
                        <div className="relative h-[18px] w-[66px] shrink-0 overflow-hidden whitespace-nowrap pl-[3px] pt-[5px] leading-[13px]">
                            {n >= 32 && n <= 42 && (
                                <div className="absolute left-px top-0 h-0 w-0 border-r-[5px] border-t-[5px] border-r-transparent border-t-[#008000]" />
                            )}
                            {e}
                            {n === 35 && <div className="absolute inset-0 border-y-[3px] border-l-[3px] border-black" />}
                        </div>
                    </div>
                ))}
            </div>
            <div className="flex w-[16px] shrink-0 flex-col items-stretch bg-[#8aa9d2]">
                <div className="flex h-[17px] shrink-0 items-center justify-center">
                    <svg width="9" height="5" viewBox="0 0 9 5"><path d="M0 5h9L4.500 0z" fill="#3f5f8c" /></svg>
                </div>
                <div className="h-[132px] shrink-0" />
                <div className="flex h-[471px] shrink-0 items-center justify-center rounded-[2px] border border-[#7f9cc4] bg-gradient-to-r from-[#eef3fa] to-[#bccde4]">
                    <div className="h-[5px] w-[8px] border-y border-[#7f8fa5] bg-[linear-gradient(#7f8fa5,#7f8fa5)] bg-[length:100%_1px] bg-center bg-no-repeat" />
                </div>
                <div className="flex flex-1 items-center justify-center">
                    <svg width="9" height="5" viewBox="0 0 9 5"><path d="M0 0h9L4.500 5z" fill="#3f5f8c" /></svg>
                </div>
            </div>
        </div>
    )
}

function NavTri({ d }: { d: string }) {
    return (
        <svg width="7" height="8" viewBox="0 0 7 8"><path d={d} fill="#1f3f75" /></svg>
    )
}

function SheetBar() {
    return (
        <div className="flex h-[16px] shrink-0 border-t border-[#a9bfda] bg-gradient-to-r from-[#a9c3e3] to-[#8faccf]">
            <div className="flex w-[62px] shrink-0 items-center justify-around px-[3px]">
                <NavTri d="M0 0h1.500v8H0zM7 0v8L2 4z" />
                <NavTri d="M6 0v8L1 4z" />
                <NavTri d="M1 0v8l5-4z" />
                <NavTri d="M0 0v8l5-4zM5.500 0H7v8H5.500z" />
            </div>
            <div className="flex w-[58px] shrink-0 items-center justify-center rounded-b-[2px] border-x border-b border-[#7d9cc4] bg-gradient-to-b from-white to-[#dbe7f6] pl-[3px] font-['Liberation_Mono',monospace] text-[12px] leading-[14px] text-[#15428b]">
                Sheet1
            </div>
            <div className="flex w-[34px] shrink-0 items-center justify-center rounded-b-[2px] border-r border-b border-[#7d9cc4] bg-[#b7cde9]">
                <svg width="13" height="13" viewBox="0 0 13 13">
                    <path d="M3 3h9v9H3z" fill="#eef3fa" stroke="#6f84a0" />
                    <circle cx="3" cy="3" r="2.500" fill="#f0a030" />
                </svg>
            </div>
            <div className="flex-1" />
            <div className="w-[8px] shrink-0 border-x border-[#e9f0fa] bg-[#c7d9f1]" />
            <div className="flex w-[16px] shrink-0 items-center justify-center border border-[#6c88ad] bg-gradient-to-b from-[#e4ebf5] to-[#aabdd6]">
                <svg width="5" height="9" viewBox="0 0 5 9"><path d="M5 0v9L0 4.500z" fill="#34527e" /></svg>
            </div>
            <div className="ml-[2px] flex w-[370px] shrink-0 items-center justify-center rounded-[1px] border border-[#3f6fae] bg-gradient-to-b from-[#d0e0f7] to-[#a8c5ee]">
                <div className="flex gap-px">
                    <div className="h-[7px] w-px bg-[#6f7f92]" />
                    <div className="h-[7px] w-px bg-[#6f7f92]" />
                    <div className="h-[7px] w-px bg-[#6f7f92]" />
                    <div className="h-[7px] w-px bg-[#6f7f92]" />
                </div>
            </div>
            <div className="w-[221px] shrink-0 bg-[#7c9bc5]" />
            <div className="flex w-[16px] shrink-0 items-center justify-center border border-[#6c88ad] bg-gradient-to-b from-[#e4ebf5] to-[#aabdd6]">
                <svg width="5" height="9" viewBox="0 0 5 9"><path d="M0 0v9l5-4.500z" fill="#34527e" /></svg>
            </div>
            <div className="w-[17px] shrink-0 bg-[#7c9bc5]" />
        </div>
    )
}

function StatusBar() {
    return (
        <div className="flex h-[22px] shrink-0 items-center border-t border-[#e8f0fb] bg-gradient-to-b from-[#d4e3f9] via-[#b6d0f3] to-[#d0e0f6] font-['Noto_Sans_CJK_SC',sans-serif] text-[12px] leading-[18px] text-[#15428b]">
            <span className="ml-[7px] w-[32px]">就绪</span>
            <div className="h-full w-px bg-[#9db8dc]" />
            <div className="flex-1" />
            <div className="h-full w-px bg-[#9db8dc]" />
            <div className="ml-[5px] flex h-[18px] w-[55px] items-center overflow-hidden rounded-[2px] border border-[#a7c0de] bg-[#dce8f8]">
                <div className="flex h-full w-[18px] items-center justify-center bg-gradient-to-b from-[#fde3a8] to-[#f8c665]">
                    <svg width="13" height="11" viewBox="0 0 13 11"><path d="M.5.500h12v10H.5zM4.500.5v10M8.500.5v10M.5 3.500h12M.5 7h12" fill="#fff" stroke="#666" /></svg>
                </div>
                <div className="flex h-full w-[19px] items-center justify-center">
                    <svg width="13" height="12" viewBox="0 0 13 12"><rect x="1" y="1" width="11" height="10" fill="#ddd" stroke="#666" strokeWidth="1.500" /><path d="M4 4h5M4 6h5M4 8h5" stroke="#777" /></svg>
                </div>
                <div className="flex h-full flex-1 items-center justify-center">
                    <svg width="13" height="11" viewBox="0 0 13 11"><path d="M.5.500h12v10H.5z" fill="#bbb" stroke="#666" /><path d="M2 1h4v6H2zM7 1h4v6H7z" fill="#fff" /></svg>
                </div>
            </div>
            <span className="ml-[9px] w-[40px] font-['Liberation_Sans',sans-serif] text-[13px]">100%</span>
            <div className="flex h-[16px] w-[16px] shrink-0 items-center justify-center rounded-full border border-[#7f97b8] bg-gradient-to-b from-[#f2f6fc] to-[#c2d3ea]">
                <div className="h-[2px] w-[8px] bg-[#334e77]" />
            </div>
            <div className="relative h-px w-[102px] shrink-0 bg-[#7f9cc4]">
                <div className="absolute -top-[6px] left-[44px] h-[13px] w-[8px] rounded-b-[4px] border border-[#7f93ad] bg-gradient-to-b from-[#f6f8fb] to-[#cdd8e6]" />
            </div>
            <div className="relative mr-[5px] flex h-[16px] w-[16px] shrink-0 items-center justify-center rounded-full border border-[#7f97b8] bg-gradient-to-b from-[#f2f6fc] to-[#c2d3ea]">
                <div className="h-[2px] w-[8px] bg-[#334e77]" />
                <div className="absolute h-[8px] w-[2px] bg-[#334e77]" />
            </div>
        </div>
    )
}

function TaskBtn({ className, children }: { className: string; children?: ReactNode }) {
    return (
        <div className={`flex h-full shrink-0 justify-center rounded-t-[2px] border-x border-t border-[#8fbdf0] bg-[#7eb4f0] ${className}`}>
            {children}
        </div>
    )
}

function Taskbar() {
    return (
        <div className="flex h-[8px] shrink-0 items-stretch overflow-hidden border-t border-[#1c3554] bg-[#65a9f0]">
            <div className="ml-[9px] h-[28px] w-[30px] shrink-0 rounded-full border border-[#d4dde8] bg-[#3e6fa8]" />
            <div className="ml-[32px] h-[12px] w-[9px] shrink-0 rounded-full bg-[#e4d34a]" />
            <div className="ml-[1px] h-[12px] w-[9px] shrink-0 rounded-full bg-[#7fc3ef]" />
            <div className="ml-[50px] h-[12px] w-[14px] shrink-0 rounded-full bg-[#eeb92f]" />
            <div className="ml-[25px] h-[10px] w-[14px] shrink-0 bg-[#c9a55a]" />
            <TaskBtn className="ml-[30px] w-[58px]"><div className="h-[6px] w-[16px] rounded-t-full bg-[#eef3e8]" /></TaskBtn>
            <div className="ml-[17px] h-[6px] w-[32px] shrink-0 rounded-t-[3px] bg-[#64c3ee]" />
            <TaskBtn className="w-[59px]"><div className="h-[5px] w-[14px] rounded-t-full bg-[#d9483b]" /></TaskBtn>
            <TaskBtn className="w-[65px]"><div className="h-[7px] w-[32px] rounded-t-[2px] bg-[#0bd40b]" /></TaskBtn>
            <TaskBtn className="w-[59px]"><div className="h-[6px] w-[26px] border border-[#7c8794] bg-[#d8dde2]" /></TaskBtn>
            <TaskBtn className="ml-[3px] w-[59px]"><div className="h-[5px] w-[20px] rounded-t-full bg-[#8fd06a]" /></TaskBtn>
            <TaskBtn className="ml-[3px] w-[59px] bg-[#a9cdf5]"><div className="h-[6px] w-[24px] border border-[#2f8a3a] bg-[#e6f3e2]" /></TaskBtn>
        </div>
    )
}

export default function App() {
    return (
        <div className="relative flex h-[868px] w-[1600px] flex-col overflow-hidden">
            <TitleBar />
            <TabStrip />
            <Ribbon />
            <FormulaBar />
            <Sheet />
            <SheetBar />
            <StatusBar />
            <Taskbar />
            <Chrome />
        </div>
    )
}
